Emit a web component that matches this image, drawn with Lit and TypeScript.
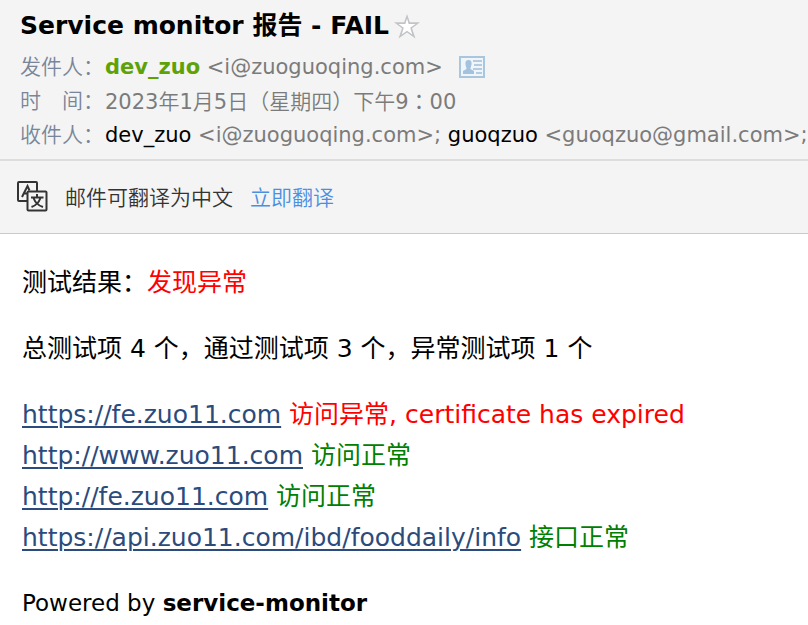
import { LitElement, html, css } from "lit";
import { customElement } from "lit/decorators.js";

interface Check {
  url: string;
  message: string;
  ok: boolean;
}

const CHECKS: Check[] = [
  { url: "https://fe.zuo11.com", message: "访问异常, certificate has expired", ok: false },
  { url: "http://www.zuo11.com", message: "访问正常", ok: true },
  { url: "http://fe.zuo11.com", message: "访问正常", ok: true },
  { url: "https://api.zuo11.com/ibd/fooddaily/info", message: "接口正常", ok: true },
];

@customElement("app-root")
export class AppRoot extends LitElement {
  static styles = css`
    :host {
      display: block;
      min-height: 100vh;
      overflow: hidden;
      background: #fff;
      color: #000;
      font-family: "DejaVu Sans", "Noto Sans CJK SC", sans-serif;
    }
    h1, p, dl, dd, ul { margin: 0; padding: 0; }
    .head {
      background: #f4f4f4;
      padding: 8px 0 7px 20px;
      border-bottom: 2px solid #ddd;
    }
    .title-row { display: flex; align-items: center; gap: 5px; height: 36px; margin-bottom: 6px; }
    h1 { font-size: 25px; line-height: 36px; font-weight: 700; white-space: nowrap; }
    button {
      display: block;
      padding: 0;
      border: 0;
      background: none;
      cursor: pointer;
    }
    svg { display: block; }
    .field {
      display: flex;
      align-items: center;
      height: 34px;
      line-height: 34px;
      font-size: 21px;
      color: #7b7b7b;
      white-space: nowrap;
    }
    dt, .light { font-family: "DejaVu Sans", "Noto Sans CJK SC DemiLight", "Noto Sans CJK SC Light", "Noto Sans CJK SC", sans-serif; }
    dt { flex: none; color: #798699; }
    .field dd { display: flex; align-items: center; gap: 16px; padding-left: 1px; }
    .sender { color: #5fa207; }
    .person { color: #000; }
    .wide { font-family: "Noto Sans CJK TC", sans-serif; }
    .translate {
      display: flex;
      align-items: center;
      height: 70px;
      padding: 0 0 2px 17px;
      background: #f4f4f4;
      border-bottom: 1px solid #c5cbd3;
      font-size: 21px;
      color: #333;
      white-space: nowrap;
    }
    .translate span { margin: 0 17px; }
    .translate a { color: #4a90e2; text-decoration: none; }
    .body {
      display: flex;
      flex-direction: column;
      gap: 25px;
      padding: 28px 22px 0;
      font-size: 25px;
      line-height: 41px;
    }
    .powered { font-size: 23px; }
    ul { list-style: none; }
    .body a { color: #2b4b7c; text-decoration-thickness: 2px; text-underline-offset: 3px; }
    .bad { color: #f00; }
    .good { color: #008000; }
  `;

  render() {
    return html`
      <header class="head">
        <div class="title-row">
          <h1>Service monitor 报告 - FAIL</h1>
          <button type="button" aria-label="星标">
            <svg width="26" height="26" viewBox="0 0 26 26">
              <path d="M13 1 15.800 9.300H26L18 15.200 21.500 25.500 13 19.500 4.500 25.500 8 15.200 0 9.300H10.200Z" fill="#c1c3c6" />
              <path d="M13 5.500 14.600 10.900H21.500L16.200 14.800 18.300 21.500 13 17.700 7.700 21.500 9.800 14.800 4.500 10.900H11.400Z" fill="#fff" />
            </svg>
          </button>
        </div>
        <dl>
          <div class="field">
            <dt>发件人：</dt>
            <dd>
              <span><b class="sender">dev_zuo</b> &lt;i@zuoguoqing.com&gt;</span>
              <button type="button" aria-label="联系人">
                <svg width="26" height="22" viewBox="0 0 26 22">
                  <rect x="1" y="1" width="24" height="20" fill="#f0f5fa" stroke="#a9c6df" stroke-width="2" />
                  <path d="M9.500 4C12 4 13 6 12.500 8.500C12 11 11.500 11.500 11.500 13L15 15V18H4V15L7.500 13C7.500 11.500 7 11 6.500 8.500C6 6 7 4 9.500 4Z" fill="#a3c2dd" />
                  <path d="M14 5H23M15 9H23M14 13H23M17 17H23" stroke="#b4cce2" stroke-width="2" />
                </svg>
              </button>
            </dd>
          </div>
          <div class="field">
            <dt>时　间：</dt>
            <dd><span class="light">2023年1月5日（星期四）下午9<span class="wide">：</span>00</span></dd>
          </div>
          <div class="field">
            <dt>收件人：</dt>
            <dd><span><span class="person">dev_zuo</span> &lt;i@zuoguoqing.com&gt;; <span class="person">guoqzuo</span> &lt;guoqzuo@gmail.com&gt;;</span></dd>
          </div>
        </dl>
      </header>
      <section class="translate light">
        <svg width="31" height="31" viewBox="0 0 31 31" fill="none" stroke="#333" stroke-width="2">
          <path d="M10 20H2Q1 20 1 19V2Q1 1 2 1H19Q20 1 20 2V10" />
          <path d="M5 16 10.500 5 12.500 9.500M7.500 12.500H10" />
          <rect x="10.500" y="10.500" width="19" height="19" rx="1" />
          <path d="M20 13V16M14 16.500H26.500M23.500 17C22 21 19 24.500 14.500 26M16.500 17C18 21 21 24.500 26 26" />
        </svg>
        <span>邮件可翻译为中文</span>
        <a href="#translate">立即翻译</a>
      </section>
      <main class="body">
        <p>测试结果：<span class="bad">发现异常</span></p>
        <p>总测试项 4 个，通过测试项 3 个，异常测试项 1 个</p>
        <ul>
          ${CHECKS.map(
            (c) => html`<li><a href=${c.url}>${c.url}</a> <span class=${c.ok ? "good" : "bad"}>${c.message}</span></li>`
          )}
        </ul>
        <p class="powered">Powered by <b>service-monitor</b></p>
      </main>
    `;
  }
}
